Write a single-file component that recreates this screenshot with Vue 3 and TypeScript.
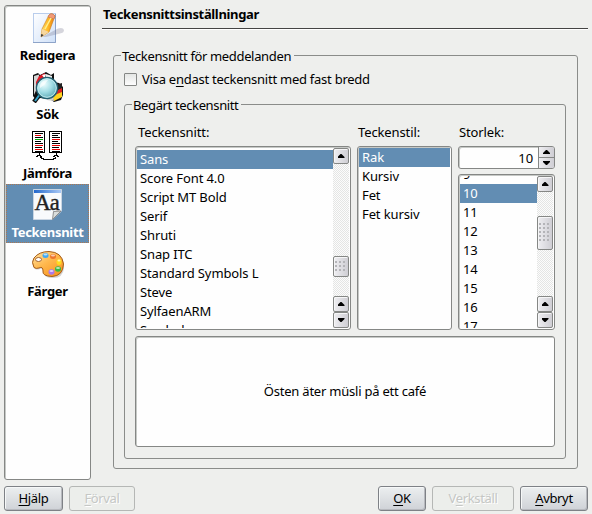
<script setup lang="ts">
import { ref } from 'vue'

interface Page { id: string; label: string }

const pages: Page[] = [
  { id: 'edit', label: 'Redigera' },
  { id: 'search', label: 'Sök' },
  { id: 'diff', label: 'Jämföra' },
  { id: 'fonts', label: 'Teckensnitt' },
  { id: 'colors', label: 'Färger' },
]
const activePage = ref('fonts')

const families = ['Sans', 'Score Font 4.0', 'Script MT Bold', 'Serif', 'Shruti', 'Snap ITC',
  'Standard Symbols L', 'Steve', 'SylfaenARM', 'Symbol']
const styles = ['Rak', 'Kursiv', 'Fet', 'Fet kursiv']
const sizes = ['9', '10', '11', '12', '13', '14', '15', '16', '17']

const family = ref('Sans')
const fontStyle = ref('Rak')
const size = ref('10')

const diffLines = ['#000', '#e00', '#000', '#0a0', '#000', '#000', '#e00', '#000', '#e00', '#000']
</script>

<template>
  <div class="window">
    <div class="main">
      <nav class="sidebar">
        <div v-for="p in pages" :key="p.id" class="page" :class="{ active: p.id === activePage }" @click="activePage = p.id">
          <svg v-if="p.id === 'edit'" class="icon" viewBox="0 0 32 32">
            <defs>
              <linearGradient id="paper" x1="0" y1="0" x2="1" y2="1"><stop offset="0" stop-color="#fff" /><stop offset="1" stop-color="#cfe0f8" /></linearGradient>
              <linearGradient id="pencil" x1="0" y1="0" x2="1" y2="0"><stop offset="0" stop-color="#ffe070" /><stop offset=".5" stop-color="#ffb824" /><stop offset="1" stop-color="#e87a10" /></linearGradient>
            </defs>
            <rect x="1.500" y="1.500" width="22" height="29" fill="url(#paper)" stroke="#b9cdec" />
            <path d="M1 30.500H23.500V2" fill="none" stroke="#8da3c8" />
            <path d="M10 25L26 16.500Q31 15 32 18Q32 21 28 21.500L14 25Z" fill="#777790" opacity=".3" />
            <path d="M9 25L10 17L17 3Q20 0 23 4L17 20Z" fill="url(#pencil)" stroke="#c87818" stroke-width=".6" />
            <path d="M17 3Q20 0 23 4L22 7L16 5Z" fill="#f29a78" stroke="#bd6c48" stroke-width=".5" />
            <path d="M13 17L19 6" stroke="#fff08c" stroke-width="1.500" />
            <path d="M9 25L10 17L17 20Z" fill="#f6d7a0" /><path d="M9 25L9.300 22L11.500 23Z" fill="#222" />
          </svg>
          <svg v-else-if="p.id === 'search'" class="icon" viewBox="0 0 32 32">
            <defs><radialGradient id="lens" cx=".35" cy=".3" r=".8"><stop offset="0" stop-color="#f0ffff" /><stop offset=".5" stop-color="#a0dce4" /><stop offset="1" stop-color="#4d9daa" /></radialGradient></defs>
            <path d="M1 4L6 2L8 4L14 1L19 4L22 2V11L27 12L31 16V24L29 29L22 31L18 28L8 27L4 29L1 25Z" fill="#111" />
            <path d="M2 5L7 3.500V13L2 24Z" fill="#d3d3d3" /><path d="M7 5L13 2V11L4 21V11Z" fill="#e01825" />
            <path d="M14 3L20 5V10H14Z" fill="#eee" /><path d="M10 4L14 3L13 8Z" fill="#fff" />
            <path d="M23 14L30 12V19L25 21Z" fill="#222" /><path d="M24 20L30 17V22L24 25Z" fill="#d22" />
            <path d="M20 25L30 21V26L22 30Z" fill="#ffd21d" /><path d="M14 26L21 25L22 30L15 29Z" fill="#ccc" />
            <path d="M8 23L2 31" stroke="#111" stroke-width="4.500" /><path d="M8 23L3 30" stroke="#35a5ca" stroke-width="2" />
            <circle cx="15" cy="17" r="10.500" fill="url(#lens)" stroke="#246071" stroke-width="1.500" />
            <circle cx="15" cy="17" r="9.300" fill="none" stroke="#c5edf0" />
            <path d="M8 14Q10 9 16 9Q13 14 8 17Z" fill="#fff" opacity=".65" />
          </svg>
          <svg v-else-if="p.id === 'diff'" class="icon" viewBox="0 0 32 32" shape-rendering="crispEdges">
            <g v-for="x in [1, 18]" :key="x">
              <rect :x="x - .5" y="1.500" width="12" height="21" fill="#fff" stroke="#000" />
              <rect v-for="(c, i) in diffLines" :key="i" :x="x + 2" :y="3 + i * 2" :width="i === 1 || i === 4 ? 6 : i === 7 ? 7 : 8" height="1" :fill="x === 18 && i === 1 ? '#000' : x === 18 && i === 3 ? '#e00' : c" />
            </g>
            <path d="M7 23V25M5 25H9M4 26.500H6M8 26.500H10M24 23V25M22 25H26M21 26.500H23M25 26.500H27" fill="none" stroke="#000" />
            <path d="M8 27H9V28H11V29H21V28H23V27" fill="none" stroke="#000" />
          </svg>
          <svg v-else-if="p.id === 'fonts'" class="icon" viewBox="0 0 32 32">
            <defs><linearGradient id="bar"><stop offset="0" stop-color="#2469cd" /><stop offset="1" stop-color="#a9c8f5" /></linearGradient></defs>
            <path d="M1.500 .5H29.500V22L20.500 30.500H1.500Z" fill="#f8fafc" stroke="#c9d5e2" />
            <rect x="2" y="1" width="27" height="3" fill="url(#bar)" />
            <text x="2.500" y="21" class="glyph">Aa</text>
            <path d="M20.500 30.500L21.500 22.500L29 22Z" fill="#d9dddc" stroke="#777" stroke-width=".8" />
          </svg>
          <svg v-else class="icon" viewBox="0 0 32 32">
            <defs><linearGradient id="wood" x1="0" y1="0" x2=".8" y2="1"><stop offset="0" stop-color="#ffe3a5" /><stop offset=".5" stop-color="#ffb84d" /><stop offset="1" stop-color="#f79522" /></linearGradient></defs>
            <g transform="translate(0 2)">
              <path d="M3 19Q-1 14 1 9Q6 2 17 2Q30 2 32 14Q33 28 21 28Q11 28 12 22Q12 17 8 19Q5 20 3 19Z" fill="#aaa" opacity=".5" />
              <path d="M2 17.500Q-1 12 2 8Q7 1.500 17 1.500Q30 2 31.500 14Q31 26 20 26.500Q10 26 11 21Q11 16 7 18Q4 19 2 17.500Z" fill="url(#wood)" stroke="#a65c17" />
              <ellipse cx="6.500" cy="9.500" rx="3" ry="2" fill="#fff" stroke="#a56531" />
              <ellipse cx="13.500" cy="5.500" rx="3" ry="2.500" fill="#40a8f2" /><ellipse cx="21" cy="6.500" rx="3" ry="2.500" fill="#ed752e" />
              <ellipse cx="27" cy="12" rx="2.500" ry="3" fill="#ffdc20" /><ellipse cx="26" cy="19" rx="3" ry="2.700" fill="#36b944" />
              <ellipse cx="19.500" cy="22" rx="3" ry="2.700" fill="#aa78eb" />
              <g fill="#fff" opacity=".65"><ellipse cx="13.500" cy="4.500" rx="2" ry="1" /><ellipse cx="21" cy="5.500" rx="2" ry="1" /><ellipse cx="27" cy="10.500" rx="1.500" ry="1" /><ellipse cx="26" cy="18" rx="2" ry="1" /><ellipse cx="19.500" cy="21" rx="2" ry="1" /></g>
            </g>
          </svg>
          <span>{{ p.label }}</span>
        </div>
      </nav>

      <section class="content">
        <h1>Teckensnittsinställningar</h1>
        <div class="group outer">
          <div class="legend">Teckensnitt för meddelanden</div>
          <label class="check"><i class="box"></i><span>Visa e<u>n</u>dast teckensnitt med fast bredd</span></label>
          <div class="group inner">
            <div class="legend">Begärt teckensnitt</div>
            <div class="columns">
              <div class="col family">
                <label>Teckensnitt:</label>
                <div class="list">
                  <div class="rows">
                    <div v-for="f in families" :key="f" class="row" :class="{ selected: f === family }" @click="family = f">{{ f }}</div>
                  </div>
                  <div class="scrollbar">
                    <i class="sb up"></i><i class="thumb"></i><i class="sb up"></i><i class="sb down"></i>
                  </div>
                </div>
              </div>
              <div class="col style">
                <label>Teckenstil:</label>
                <div class="list">
                  <div class="rows">
                    <div v-for="s in styles" :key="s" class="row" :class="{ selected: s === fontStyle }" @click="fontStyle = s">{{ s }}</div>
                  </div>
                </div>
              </div>
              <div class="col size">
                <label>Storlek:</label>
                <div class="spin">
                  <span>{{ size }}</span>
                  <div class="steps"><i class="up"></i><i class="down"></i></div>
                </div>
                <div class="list">
                  <div class="rows">
                    <div v-for="s in sizes" :key="s" class="row" :class="{ selected: s === size }" @click="size = s">{{ s }}</div>
                  </div>
                  <div class="scrollbar">
                    <i class="sb up"></i><i class="thumb"></i><i class="sb up"></i><i class="sb down"></i>
                  </div>
                </div>
              </div>
            </div>
            <div class="preview">Östen äter müsli på ett café</div>
          </div>
        </div>
      </section>
    </div>

    <footer>
      <button class="help"><span><u>H</u>jälp</span></button>
      <button class="defaults" disabled><span><u>F</u>örval</span></button>
      <button class="ok"><span><u>O</u>K</span></button>
      <button class="apply" disabled><span>V<u>e</u>rkställ</span></button>
      <button class="cancel"><span><u>A</u>vbryt</span></button>
    </footer>
  </div>
</template>

<style>
body { background: #eeefed; overflow: hidden; }
</style>

<style scoped>
* { box-sizing: border-box; }
.window { width: 592px; height: 514px; background: #eeefed; color: #000; font: 13px/19px "Noto Sans", sans-serif; letter-spacing: -.35px; white-space: nowrap; cursor: default; }
u { text-decoration: underline; text-underline-offset: 2px; text-decoration-thickness: 1px; }
.main { display: flex; height: 480px; padding: 5px 4px 0; }
.sidebar { width: 87px; height: 475px; background: #fefefe; border: 1px solid #858785; border-radius: 3px; padding: 1px; box-shadow: inset 1px 1px #c6c9c6; }
.page { height: 59px; display: flex; flex-direction: column; align-items: center; padding-top: 4px; font-weight: bold; border: 1px solid transparent; letter-spacing: -.3px; }
.page.active { width: 83px; background: #628db3; border: 1px dotted #ad7750; color: #fff; }
.page span { line-height: 18px; margin-top: 2px; }
.icon { width: 32px; height: 32px; flex: none; display: block; }
.glyph { font: 22.500px "Liberation Serif", serif; letter-spacing: -1px; fill: #222; stroke: #222; stroke-width: .4px; }
.content { margin-left: 11px; width: 486px; }
h1 { margin: 0; height: 24px; padding-left: 1px; font: bold 13px/19px "Noto Sans", sans-serif; letter-spacing: -.35px; border-bottom: 1px solid #444; box-shadow: 0 1px #fff; }
.group { border: 1px solid #8a8c8a; border-radius: 3px; }
.legend { width: max-content; height: 20px; line-height: 20px; margin: -10px 0 0 -3px; padding: 0 3px 0 1px; background: #eeefed; }
.outer { width: 465px; height: 414px; margin: 26px 0 0 11px; padding: 0 10px; }
.check { display: flex; align-items: center; gap: 5px; height: 19px; margin-top: 4px; letter-spacing: -.25px; }
.box { width: 13px; height: 13px; border: 1px solid #858785; border-radius: 1px; background: linear-gradient(#e4e6e4, #fdfdfd); }
.inner { width: 442px; height: 355px; margin-top: 15px; padding: 0 10px; }
.inner > .legend { letter-spacing: -.37px; }
.columns { display: flex; gap: 6px; height: 215px; }
.col { display: flex; flex-direction: column; letter-spacing: -.12px; }
.col > label { height: 31px; padding: 8px 0 0 3px; }
.col.family { width: 216px; }
.col.style { width: 95px; }
.col.style > label { padding-left: 1px; }
.col.size { width: 97px; }
.col.size > label { padding-left: 1px; }
.list, .spin, .preview { background: #fefefe; border: 1px solid #858785; border-radius: 3px; box-shadow: inset 1px 1px #c6c9c6; }
.list { display: flex; flex: 1; min-height: 0; padding: 1px; overflow: hidden; }
.rows { flex: 1; overflow: hidden; }
.row { height: 19px; padding-left: 3px; }
.row.selected { background: #628db3; color: #fff; }
.family .rows { padding-top: 2px; }
.size .row:first-child { margin-top: -11px; }
.scrollbar { width: 16px; display: flex; flex-direction: column; background: repeating-conic-gradient(#e4e5e4 0 25%, #fcfcfc 0 50%) 0 0 / 2px 2px; }
.sb, .thumb { flex: none; width: 16px; height: 16px; border: 1px solid #858785; border-radius: 2px; background: linear-gradient(90deg, #eeeef1, #cfced4); box-shadow: inset 1px 1px #f6f6f7; display: flex; align-items: center; justify-content: center; }
.up::before, .down::before { content: ""; width: 7px; height: 4px; background: #000; clip-path: polygon(3px 0, 4px 0, 7px 3px, 7px 4px, 0 4px, 0 3px); }
.down::before { clip-path: polygon(0 0, 7px 0, 7px 1px, 4px 4px, 3px 4px, 0 1px); }
.thumb { margin-bottom: auto; }
.thumb::before { content: ""; width: 12px; height: 12px; background: radial-gradient(circle at 1px 1px, #b4b4b8 0 .8px, #fff .8px 1.400px, transparent 1.500px) 0 0 / 4px 4px; }
.family .thumb { height: 21px; margin-top: 92px; }
.size .thumb { height: 34px; margin-top: 24px; }
.size .thumb::before { height: 20px; }
.spin { display: flex; justify-content: flex-end; height: 23px; margin-bottom: 5px; overflow: hidden; }
.spin span { line-height: 22px; padding-right: 5px; }
.steps { width: 16px; display: flex; flex-direction: column; border-left: 1px solid #858785; background: linear-gradient(90deg, #eeeef1, #cfced4); }
.steps i { flex: 1; display: flex; align-items: center; justify-content: center; }
.steps i + i { border-top: 1px solid #858785; }
.preview { height: 111px; margin-top: 6px; display: flex; align-items: center; justify-content: center; letter-spacing: -.22px; }
footer { display: flex; gap: 6px; padding: 6px 4px 0; }
button { height: 25px; padding: 0; border: 1px solid #7e8186; border-radius: 3px; background: linear-gradient(#eceff0, #cfd2d7); box-shadow: inset 1px 1px #f6f8f8, inset -1px -1px #b7b9be; color: #000; font: inherit; letter-spacing: inherit; }
button:disabled { color: #c5c7c5; border-color: #b5b7b5; background: #eceeeb; box-shadow: none; text-shadow: 1px 1px #fff; }
.help { width: 59px; }
.defaults { width: 66px; }
.ok { width: 48px; margin-left: auto; }
.apply { width: 82px; }
.cancel { width: 68px; }
</style>
